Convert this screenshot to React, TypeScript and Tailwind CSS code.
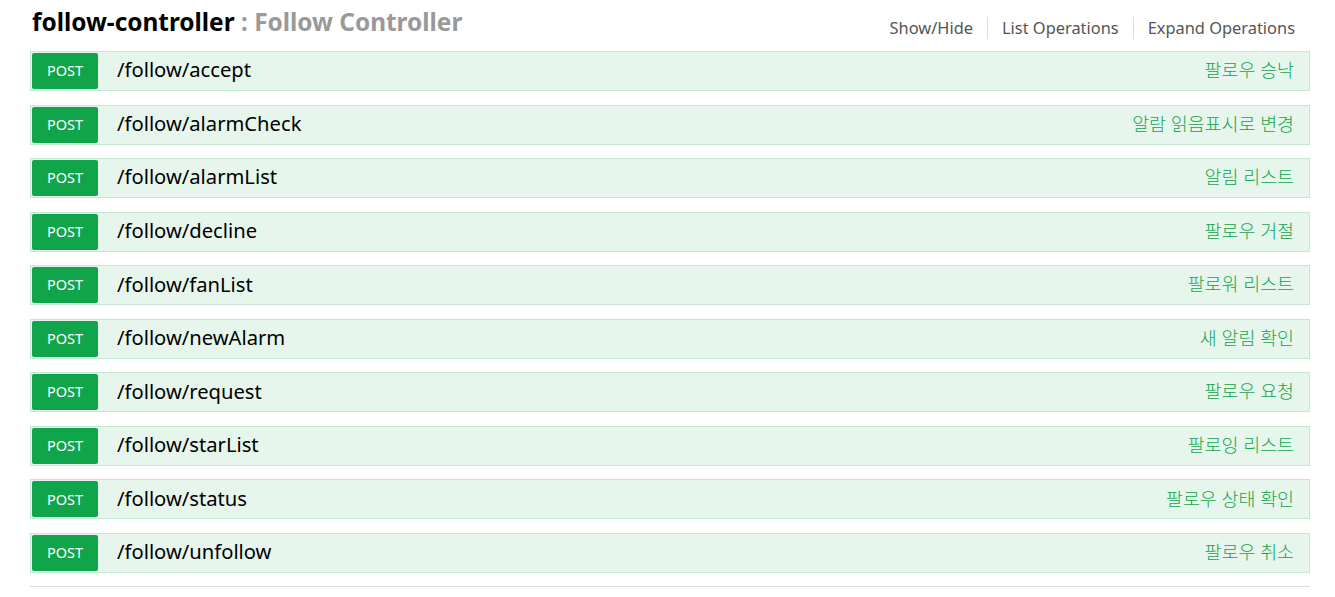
const ops = [
  { path: "/follow/accept", summary: "팔로우 승낙" },
  { path: "/follow/alarmCheck", summary: "알람 읽음표시로 변경" },
  { path: "/follow/alarmList", summary: "알림 리스트" },
  { path: "/follow/decline", summary: "팔로우 거절" },
  { path: "/follow/fanList", summary: "팔로워 리스트" },
  { path: "/follow/newAlarm", summary: "새 알림 확인" },
  { path: "/follow/request", summary: "팔로우 요청" },
  { path: "/follow/starList", summary: "팔로잉 리스트" },
  { path: "/follow/status", summary: "팔로우 상태 확인" },
  { path: "/follow/unfollow", summary: "팔로우 취소" },
];

function OperationRow({ path, summary }: { path: string; summary: string }) {
  return (
    <li className="mb-[13.56px] flex h-[40px] items-center border border-[#c3e8d1] bg-[#e7f6ec] p-px">
      <span className="flex h-full w-[66px] items-center justify-center rounded-[2px] bg-[#10a54a] text-[14.5px] text-white">
        POST
      </span>
      <span className="ml-[19px] pb-[3px] text-[20.2px] text-black">{path}</span>
      <span className="ml-auto pb-[2px] pr-[14px] text-[18.4px] font-light text-[#10a54a]">{summary}</span>
    </li>
  );
}

export default function App() {
  return (
    <div
      className="min-h-[597px] bg-white px-[30px]"
      style={{ fontFamily: '"Noto Sans", "Noto Sans CJK KR", sans-serif' }}
    >
      <div className="w-[1280px]">
        <div className="flex h-[51px] items-start justify-between">
          <h2 className="pl-[2px] pt-[5px] text-[24.4px] font-bold leading-[34px] text-black">
            follow-controller <span className="text-[#999]">: Follow Controller</span>
          </h2>
          <ul className="mr-[15px] mt-[17px] flex items-center text-[16.4px] leading-[22px] text-[#555]">
            <li className="border-r border-[#ddd] pr-[14px]">Show/Hide</li>
            <li className="border-r border-[#ddd] px-[14px]">List Operations</li>
            <li className="pl-[14px]">Expand Operations</li>
          </ul>
        </div>
        <ul>
          {ops.map((op) => (
            <OperationRow key={op.path} path={op.path} summary={op.summary} />
          ))}
        </ul>
        <div className="border-t border-[#ddd]" />
      </div>
    </div>
  );
}
